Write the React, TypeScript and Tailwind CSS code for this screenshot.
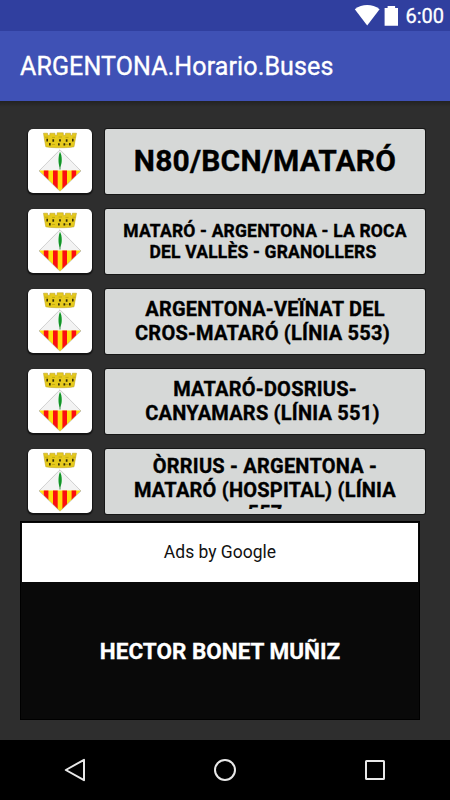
import React from "react";

function Crest() {
  return (
    <div className="h-16 w-16 shrink-0 rounded-[5px] bg-white shadow-[0_1px_1px_1px_#141414]">
      <svg width="64" height="64" viewBox="0 0 64 64">
        <path
          d="M15.5 4.2h4v2h2.4v-2h5v2h2.2V3.8h6.2v2.4h2.2v-2h5v2h1.8v-2h4.2l-1.1 5.6-1.4 8c-6.5 1.3-21.6 1.3-28.2 0l-1.4-7.8z"
          fill="#e6ca1c"
          stroke="#b59d1c"
          strokeWidth="0.5"
        />
        <path
          d="M17 8.2h3M24 8.4h3M30.5 8h3.5M37.5 8.4h3M44.5 8.2h3M24 15.5h3M37.5 15.5h3"
          stroke="#c4aa14"
          strokeWidth="1"
        />
        <path
          d="M18.4 9.8H20v2.6h-1.6zM24.4 10.2h1.7v2.5h-1.7zM31.1 10.2h1.8v2.4h-1.8zM37.8 10.2h1.7v2.5h-1.7zM44 9.8h1.6v2.6H44zM21 14h1.7v2.4H21zM30 14.2h1.7v2.2H30zM35.5 14.2h1.7v2.2h-1.7zM41 14h1.7v2.4H41z"
          fill="#332b08"
        />
        <path d="M32 20.8 53 42 32 62.2 11 42z" fill="#f3f3f3" />
        <clipPath id="lower-field">
          <path d="M11 41.5h42L32 62.2z" />
        </clipPath>
        <g clipPath="url(#lower-field)">
          <path d="M11 41h42v22H11z" fill="#ffdf0c" />
          <path
            d="M15.8 41h4.6v22h-4.6zM25 41h4.7v22H25zM34.4 41H39v22h-4.6zM43.6 41h4.6v22h-4.6z"
            fill="#fb1010"
          />
        </g>
        <path
          d="M32 20.8 53 42 32 62.2 11 42z"
          fill="none"
          stroke="#999"
          strokeWidth="0.7"
          strokeDasharray="1 .5"
        />
        <path d="M32 22.8c2.3 4 2.6 12-.1 15.6-2-3.4-1.8-11.4.1-15.6z" fill="#16a22c" />
        <path d="M32 25v15.5" stroke="#0c7d20" strokeWidth="0.8" />
      </svg>
    </div>
  );
}

const routes = [
  {
    lines: ["N80/BCN/MATARÓ"],
    style: "text-[30px] leading-[35px] tracking-[0.18px] pb-[2px]",
  },
  {
    lines: ["MATARÓ - ARGENTONA - LA ROCA", "DEL VALLÈS - GRANOLLERS"],
    style: "text-[17.5px] leading-[21px] tracking-[0.18px] first:pt-[2px] last:pr-[4px]",
  },
  {
    lines: ["ARGENTONA-VEÏNAT DEL", "CROS-MATARÓ (LÍNIA 553)"],
    style: "text-[20px] leading-[24px] tracking-[0.22px] last:pr-[5px]",
  },
  {
    lines: ["MATARÓ-DOSRIUS-", "CANYAMARS (LÍNIA 551)"],
    style: "text-[20px] leading-[24px] tracking-[0.22px] last:pr-[5px]",
  },
];

function RouteRow({ children }: { children: React.ReactNode }) {
  return (
    <div className="flex h-[65px] gap-[13px]">
      <Crest />
      <button className="flex h-[65px] w-80 flex-col items-center justify-center overflow-hidden rounded-[2px] bg-[#d6d8d7] pb-px font-bold whitespace-nowrap text-black shadow-[0_0_0_1px_#171717] [-webkit-text-stroke:0.35px_black]">
        {children}
      </button>
    </div>
  );
}

export default function App() {
  return (
    <div className="flex h-[800px] w-[450px] flex-col overflow-hidden bg-[#2e2e2e] font-['Roboto',sans-serif]">
      <div className="flex h-[31px] shrink-0 items-center justify-end bg-[#303f9f] pr-[6px] text-white">
        <svg width="46" height="31" viewBox="0 0 46 31" fill="white">
          <path d="M.8 9.3C8.2 3.7 18.2 3.7 25.6 9.3L13.2 25.4z" />
          <path d="M30.6 8h3V6h7.5v2H44v17.8H30.6z" />
        </svg>
        <span className="ml-[5px] pt-[2px] text-[20px] leading-[31px] [-webkit-text-stroke:0.3px_white]">
          6:00
        </span>
      </div>
      <header className="flex h-[70px] shrink-0 items-center bg-[#3f51b5] pt-px pl-5 text-[25px] tracking-[0.12px] text-white [-webkit-text-stroke:0.35px_white]">
        <h1>ARGENTONA.Horario.Buses</h1>
      </header>
      <div className="h-[6px] shrink-0 bg-linear-to-b from-[#222222] to-[#2e2e2e]" />
      <main className="flex grow flex-col pt-[22px]">
        <div className="flex flex-col gap-[15px] pl-7">
          {routes.map((r) => (
            <RouteRow key={r.lines[0]}>
              {r.lines.map((l) => (
                <span key={l} className={r.style}>
                  {l}
                </span>
              ))}
            </RouteRow>
          ))}
          <RouteRow>
            <div className="mb-auto flex h-[60px] w-full flex-col items-center overflow-hidden pt-[6px] text-[20px] leading-[23.5px] tracking-[0.22px]">
              <span>ÒRRIUS - ARGENTONA -</span>
              <span>MATARÓ (HOSPITAL) (LÍNIA</span>
              <span>557</span>
            </div>
          </RouteRow>
        </div>
        <section className="mt-[7px] ml-5 flex h-[199px] w-[400px] flex-col border border-black bg-[#090909]">
          <div className="mx-px mt-px flex h-[59px] shrink-0 items-center justify-center bg-white text-[17.5px] text-[#111]">
            Ads by Google
          </div>
          <div className="flex grow items-center justify-center pt-[2px] text-[22.5px] font-bold text-white [-webkit-text-stroke:0.3px_white]">
            HECTOR BONET MUÑIZ
          </div>
        </section>
      </main>
      <nav className="flex h-[60px] shrink-0 items-center justify-around bg-black">
        <svg width="30" height="30" viewBox="0 0 30 30" fill="none" stroke="#e8e8e8" strokeWidth="2">
          <path d="M24 4.8v20.4L5.8 15z" strokeLinejoin="round" />
        </svg>
        <svg width="30" height="30" viewBox="0 0 30 30" fill="none" stroke="#e8e8e8" strokeWidth="2">
          <circle cx="15" cy="15" r="10" />
        </svg>
        <svg width="30" height="30" viewBox="0 0 30 30" fill="none" stroke="#e8e8e8" strokeWidth="2">
          <rect x="6" y="6" width="18" height="18" rx="0.5" />
        </svg>
      </nav>
    </div>
  );
}
